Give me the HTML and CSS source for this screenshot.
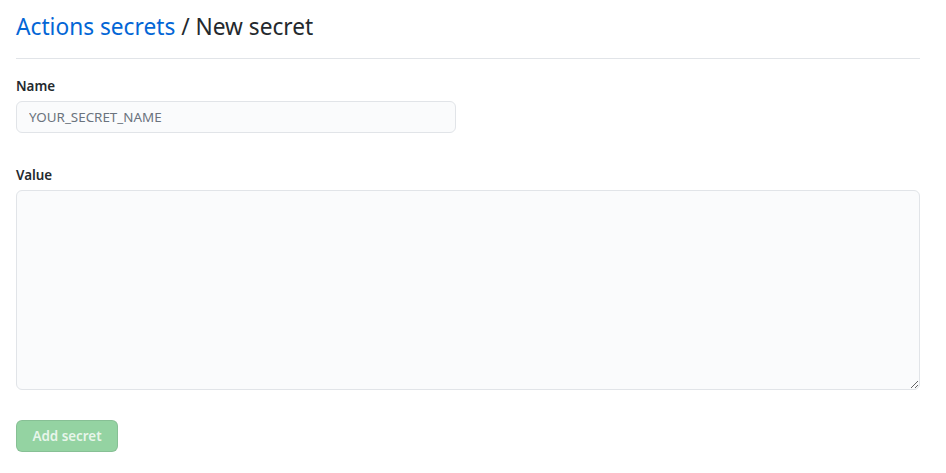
FILE: index.html
```html
<!DOCTYPE html>
<html>
<head>
<meta charset="utf-8">
<link rel="stylesheet" href="styles.css">
</head>
<body>
<div class="page">
  <div class="subhead">
    <h2 class="subhead-heading"><a href="#" class="link">Actions secrets</a> / New secret</h2>
  </div>
  <form class="form">
    <div class="group">
      <label class="label">Name</label>
      <input class="input" type="text" placeholder="YOUR_SECRET_NAME">
    </div>
    <div class="group group-value">
      <label class="label">Value</label>
      <textarea class="textarea"></textarea>
    </div>
    <div class="actions">
      <button type="button" class="btn" disabled>Add secret</button>
    </div>
  </form>
</div>
</body>
</html>
```
FILE: styles.css
```css
* { box-sizing: border-box; }
html, body { margin: 0; padding: 0; background: #fff; }
body {
  font-family: "Noto Sans", "Open Sans", sans-serif;
  color: #24292e;
  font-size: 13.4px;
}
.page {
  padding: 0 26px 0 16px;
}
.subhead {
  border-bottom: 1px solid #e1e4e8;
  padding: 10px 0 14px;
}
.subhead-heading {
  margin: 0;
  font-size: 22.7px;
  font-weight: 400;
  line-height: 34px;
  color: #24292e;
}
.link { color: #0366d6; text-decoration: none; }
.form { padding-top: 17px; }
.group { display: flex; flex-direction: column; }
.label {
  font-weight: 600;
  font-size: 13.4px;
  line-height: 20px;
  margin-bottom: 5px;
}
.input {
  width: 440px;
  height: 32px;
  padding: 5px 12px;
  font-family: inherit;
  font-size: 13.4px;
  background: #fafbfc;
  border: 1px solid #e1e4e8;
  border-radius: 6px;
  color: #24292e;
  outline: none;
}
.input::placeholder { color: #6a737d; }
.group-value { margin-top: 32px; }
.textarea {
  width: 100%;
  height: 200px;
  padding: 8px 12px;
  background: #fafbfc;
  border: 1px solid #e1e4e8;
  border-radius: 6px;
  font-family: inherit;
  font-size: 14px;
  outline: none;
}
.actions { margin-top: 30px; }
.btn {
  width: 102px;
  height: 32px;
  padding: 0;
  font-family: inherit;
  font-size: 13.4px;
  font-weight: 600;
  color: rgba(255,255,255,0.8);
  background: #94d3a2;
  border: 1px solid rgba(27,31,35,0.1);
  border-radius: 6px;
}
```
